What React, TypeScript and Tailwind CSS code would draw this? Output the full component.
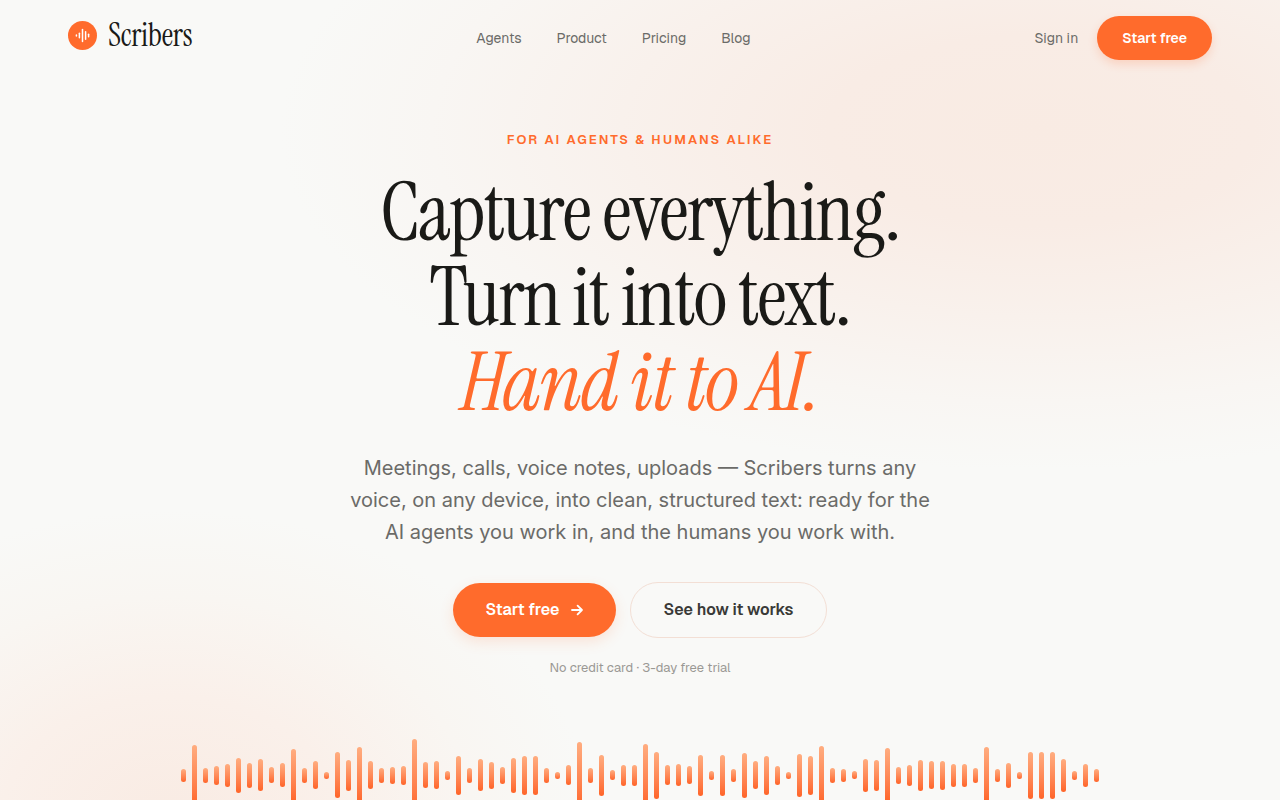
const navLinks = ["Agents", "Product", "Pricing", "Blog"];

const barHeights = [
  13, 61, 15, 19, 23, 35, 25, 32, 16, 24, 53, 15, 28, 7, 46, 31, 57, 28, 15, 17, 19,
  73, 26, 28, 9, 39, 15, 32, 27, 17, 35, 39, 39, 15, 7, 20, 67, 15, 41, 10, 21, 21,
  63, 47, 20, 22, 18, 41, 9, 41, 13, 45, 28, 39, 19, 7, 43, 39, 59, 15, 13, 8, 33,
  31, 54, 17, 21, 31, 28, 29, 23, 23, 15, 56, 13, 25, 7, 47, 47, 47, 33, 9, 23, 13,
];

function LogoMark() {
  return (
    <svg viewBox="0 0 29 29" className="size-[29px]" aria-hidden="true">
      <circle cx="14.5" cy="14.5" r="14.5" fill="#ff6b2c" />
      <g stroke="#fff" strokeWidth="1.5" strokeLinecap="round">
        <path d="M8.4 14.1v.8" />
        <path d="M11.4 12.2v4.6" />
        <path d="M14.5 8.6v11.8" />
        <path d="M17.6 10.8v7.4" />
        <path d="M20.6 13.2v2.6" />
      </g>
    </svg>
  );
}

function ArrowRight() {
  return (
    <svg
      viewBox="0 0 14 14"
      className="size-[14px]"
      fill="none"
      stroke="currentColor"
      strokeWidth="1.8"
      strokeLinecap="round"
      strokeLinejoin="round"
      aria-hidden="true"
    >
      <path d="M2 7h10M7.6 2.6 12 7l-4.4 4.4" />
    </svg>
  );
}

function Header() {
  return (
    <header className="mx-auto flex h-[76px] w-full max-w-[1200px] items-center justify-between px-7">
      <a href="#" className="flex items-center gap-[11px] pb-1.5">
        <LogoMark />
        <span className="font-['Instrument_Serif','Liberation_Serif',serif] text-[32px] leading-8 tracking-[-0.01em] text-[#1a1a17]">
          Scribers
        </span>
      </a>
      <nav className="flex items-center gap-[35px] text-sm text-[#6b6b68]">
        {navLinks.map((label) => (
          <a key={label} href="#">
            {label}
          </a>
        ))}
      </nav>
      <div className="flex items-center gap-[19px] text-sm">
        <a href="#" className="text-[#6b6b68]">
          Sign in
        </a>
        <button
          type="button"
          className="h-11 rounded-full bg-[#ff6b2c] px-[25px] font-semibold text-white shadow-[0_4px_10px_rgba(255,107,44,0.2)]"
        >
          Start free
        </button>
      </div>
    </header>
  );
}

function Hero() {
  return (
    <section className="flex flex-col items-center px-6 pt-[54px] text-center">
      <p className="text-[13px] leading-5 font-semibold tracking-[0.16em] text-[#ff6b2c] uppercase">
        For AI agents &amp; humans alike
      </p>
      <h1 className="mt-5 font-['Instrument_Serif','Liberation_Serif',serif] text-[82px] leading-[85px] tracking-[-0.02em] text-[#1a1a17]">
        Capture everything.
        <br />
        Turn it into text.
        <br />
        <em className="text-[#ff6b2c]">Hand it to AI.</em>
      </h1>
      <p className="mt-[27px] max-w-[600px] font-['Inter','Liberation_Sans',sans-serif] text-xl leading-8 text-[#6b6b68]">
        Meetings, calls, voice notes, uploads — Scribers turns any voice, on any device, into
        clean, structured text: ready for the AI agents you work in, and the humans you work with.
      </p>
      <div className="mt-[34px] flex items-center gap-3.5 font-semibold">
        <button
          type="button"
          className="flex h-[54px] items-center gap-[11px] rounded-full bg-[#ff6b2c] px-8 text-white shadow-[0_5px_14px_rgba(255,107,44,0.15)]"
        >
          Start free
          <ArrowRight />
        </button>
        <button
          type="button"
          className="h-14 rounded-full border border-[#f3dfd5] px-8 text-[#3a3a37]"
        >
          See how it works
        </button>
      </div>
      <p className="mt-5 text-[13px] leading-5 text-[#9a9894]">
        No credit card · 3-day free trial
      </p>
    </section>
  );
}

function Waveform() {
  return (
    <div
      className="mt-[60px] flex h-[74px] items-center justify-center gap-1.5 overflow-hidden"
      aria-hidden="true"
    >
      {barHeights.map((height, i) => (
        <span
          key={i}
          className="w-[5px] shrink-0 rounded-full bg-linear-to-b from-[#ffad80] to-[#ff6427]"
          style={{ height }}
        />
      ))}
    </div>
  );
}

export default function App() {
  return (
    <div className="min-h-screen bg-[#f9f9f7] bg-[radial-gradient(760px_340px_at_1040px_130px,#f9ebe3_0%,#f9ece5_28%,#f9f1ec_55%,#f9f6f3_80%,#f9f9f700_100%),radial-gradient(420px_310px_at_170px_820px,#f9ebe3_0%,#faf0ea_40%,#f9f6f2_72%,#f9f9f700_100%)] font-['Geist','Inter','Liberation_Sans',sans-serif]">
      <Header />
      <main>
        <Hero />
        <Waveform />
      </main>
    </div>
  );
}
